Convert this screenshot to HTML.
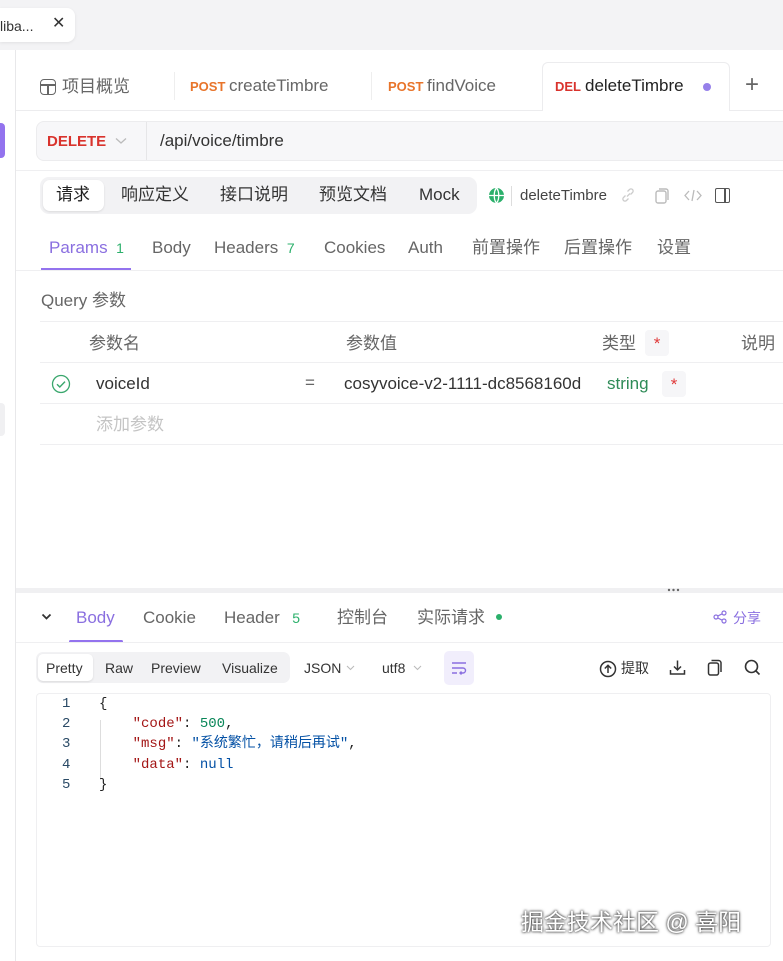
<!DOCTYPE html>
<html><head><meta charset="utf-8"><style>
*{margin:0;padding:0;box-sizing:border-box}
body{width:783px;height:961px;overflow:hidden;background:#fff;font-family:"Liberation Sans","Noto Sans CJK SC",sans-serif;color:#333;position:relative;font-size:17px}
.a{position:absolute;white-space:nowrap;line-height:22px}
.g{color:#666}
.mono{font-family:"Liberation Mono","Noto Sans CJK SC",monospace;font-size:14px}
</style></head><body>
<div class="a" style="left:0;top:0;width:783px;height:50px;background:#f3f3f5"></div>
<div class="a" style="left:0;top:8px;width:75px;height:34px;background:#fff;border-radius:0 8px 8px 0;box-shadow:0 1px 3px rgba(0,0,0,.08)"></div>
<div class="a" style="left:0;top:15px;font-size:14px;color:#333">liba...</div>
<div class="a" style="left:52px;top:13px;font-size:16px;color:#333">✕</div>
<div class="a" style="left:15px;top:50px;width:1px;height:911px;background:#e8e8ea"></div>
<div class="a" style="left:0;top:123px;width:5px;height:35px;background:#9373ee;border-radius:0 4px 4px 0"></div>
<div class="a" style="left:0;top:403px;width:5px;height:33px;background:#f0f0f2;border-radius:0 4px 4px 0"></div>
<!-- tabs -->
<div class="a" style="left:16px;top:110px;width:767px;height:1px;background:#ececee"></div>
<div class="a" style="left:542px;top:62px;width:188px;height:49px;background:#fff;border:1px solid #ececee;border-bottom:none;border-radius:6px 6px 0 0"></div>
<div class="a" style="left:40px;top:79px;width:16px;height:16px;border:1.5px solid #666;border-radius:4px"></div>
<div class="a" style="left:41px;top:84px;width:14px;height:1.5px;background:#666"></div>
<div class="a" style="left:47px;top:84px;width:1.5px;height:10px;background:#666"></div>
<div class="a g" style="left:62px;top:76px">项目概览</div>
<div class="a" style="left:174px;top:72px;width:1px;height:28px;background:#eee"></div>
<div class="a" style="left:190px;top:76px;font-size:13px;font-weight:bold;color:#e8742a">POST</div>
<div class="a g" style="left:229px;top:75px">createTimbre</div>
<div class="a" style="left:371px;top:72px;width:1px;height:28px;background:#eee"></div>
<div class="a" style="left:388px;top:76px;font-size:13px;font-weight:bold;color:#e8742a">POST</div>
<div class="a g" style="left:427px;top:75px">findVoice</div>
<div class="a" style="left:555px;top:76px;font-size:13px;font-weight:bold;color:#d9332d">DEL</div>
<div class="a" style="left:585px;top:75px;color:#222">deleteTimbre</div>
<div class="a" style="left:703px;top:83px;width:8px;height:8px;border-radius:50%;background:#9680ea"></div>
<div class="a" style="left:745px;top:74px;font-size:24px;color:#666;font-weight:300">+</div>
<!-- url bar -->
<div class="a" style="left:36px;top:121px;width:760px;height:40px;background:#f7f7f9;border:1px solid #ececee;border-radius:8px"></div>
<div class="a" style="left:146px;top:122px;width:1px;height:38px;background:#e6e6e8"></div>
<div class="a" style="left:47px;top:131px;font-size:15px;font-weight:bold;color:#d9332d">DELETE</div>
<svg class="a" style="left:115px;top:137px" width="12" height="8" viewBox="0 0 12 8"><path d="M1 1.5l5 4.5 5-4.5" stroke="#bbb" stroke-width="1.3" fill="none"/></svg>
<div class="a" style="left:160px;top:130px;color:#333">/api/voice/timbre</div>
<div class="a" style="left:16px;top:170px;width:767px;height:1px;background:#efeff1"></div>
<!-- segmented -->
<div class="a" style="left:40px;top:177px;width:437px;height:37px;background:#f2f2f4;border-radius:9px"></div>
<div class="a" style="left:43px;top:180px;width:61px;height:31px;background:#fff;border-radius:7px;box-shadow:0 1px 2px rgba(0,0,0,.1)"></div>
<div class="a" style="left:56px;top:184px;color:#222">请求</div>
<div class="a" style="left:121px;top:184px">响应定义</div>
<div class="a" style="left:220px;top:184px">接口说明</div>
<div class="a" style="left:319px;top:184px">预览文档</div>
<div class="a" style="left:419px;top:184px">Mock</div>
<svg class="a" style="left:488px;top:187px" width="17" height="17" viewBox="0 0 17 17"><circle cx="8.5" cy="8.5" r="7.5" fill="#2bb06b"/><path d="M1 8.5h15M8.5 1c-3 3-3 12 0 15M8.5 1c3 3 3 12 0 15" stroke="#fff" stroke-width="1.3" fill="none"/></svg>
<div class="a" style="left:511px;top:186px;width:1px;height:20px;background:#ddd"></div>
<div class="a" style="left:520px;top:185px;font-size:15px;color:#444">deleteTimbre</div>
<svg class="a" style="left:620px;top:187px" width="16" height="16" viewBox="0 0 16 16"><path d="M7 9.5l3-3M5.5 8.5l-2 2a2.1 2.1 0 003 3l2-2M10.5 7.5l2-2a2.1 2.1 0 00-3-3l-2 2" stroke="#ccc" stroke-width="1.3" fill="none"/></svg>
<svg class="a" style="left:654px;top:187px" width="16" height="17" viewBox="0 0 16 17"><rect x="2" y="4" width="10" height="12" rx="2" stroke="#bbb" stroke-width="1.4" fill="none"/><path d="M5 2h7a2 2 0 012 2v9" stroke="#bbb" stroke-width="1.4" fill="none"/></svg>
<svg class="a" style="left:684px;top:187px" width="18" height="17" viewBox="0 0 18 17"><path d="M5 4L1 8.5 5 13M13 4l4 4.5-4 4.5M10 3L8 14" stroke="#bbb" stroke-width="1.3" fill="none"/></svg>
<div class="a" style="left:715px;top:188px;width:15px;height:15px;border:1.8px solid #555;border-radius:2px"></div>
<div class="a" style="left:724px;top:188px;width:1.8px;height:15px;background:#555"></div>
<!-- param tabs -->
<div class="a" style="left:49px;top:237px;color:#8a6fe0">Params <span style="color:#2bb06b;font-size:14px">&nbsp;1</span></div>
<div class="a" style="left:41px;top:268px;width:90px;height:2px;background:#9373ee"></div>
<div class="a" style="left:16px;top:270px;width:767px;height:1px;background:#efeff1"></div>
<div class="a g" style="left:152px;top:237px">Body</div>
<div class="a g" style="left:214px;top:237px">Headers <span style="color:#2bb06b;font-size:14px">&nbsp;7</span></div>
<div class="a g" style="left:324px;top:237px">Cookies</div>
<div class="a g" style="left:408px;top:237px">Auth</div>
<div class="a g" style="left:472px;top:237px">前置操作</div>
<div class="a g" style="left:564px;top:237px">后置操作</div>
<div class="a g" style="left:657px;top:237px">设置</div>
<div class="a g" style="left:41px;top:290px">Query 参数</div>
<div class="a" style="left:40px;top:321px;width:743px;height:1px;background:#efeff1"></div>
<div class="a g" style="left:89px;top:333px">参数名</div>
<div class="a g" style="left:346px;top:333px">参数值</div>
<div class="a g" style="left:602px;top:333px">类型</div>
<div class="a" style="left:645px;top:330px;width:24px;height:26px;background:#f6f6f8;border-radius:4px;color:#e03a3a;text-align:center;line-height:28px">*</div>
<div class="a g" style="left:741px;top:333px">说明</div>
<div class="a" style="left:40px;top:362px;width:743px;height:1px;background:#efeff1"></div>
<svg class="a" style="left:51px;top:374px" width="20" height="20" viewBox="0 0 20 20"><circle cx="10" cy="10" r="8.5" fill="none" stroke="#3aa76d" stroke-width="1.3"/><path d="M6 10.2l2.8 2.8 5.2-5.4" fill="none" stroke="#3aa76d" stroke-width="1.4"/></svg>
<div class="a" style="left:96px;top:373px">voiceId</div>
<div class="a g" style="left:305px;top:372px">=</div>
<div class="a" style="left:344px;top:373px">cosyvoice-v2-1111-dc8568160d</div>
<div class="a" style="left:607px;top:373px;color:#2e8b57">string</div>
<div class="a" style="left:662px;top:371px;width:24px;height:26px;background:#f6f6f8;border-radius:4px;color:#e03a3a;text-align:center;line-height:28px">*</div>
<div class="a" style="left:40px;top:403px;width:743px;height:1px;background:#efeff1"></div>
<div class="a" style="left:96px;top:414px;color:#c4c4c4">添加参数</div>
<div class="a" style="left:40px;top:444px;width:743px;height:1px;background:#efeff1"></div>
<!-- divider -->
<div class="a" style="left:16px;top:588px;width:767px;height:5px;background:#f0f0f2"></div>
<svg class="a" style="left:667px;top:588px" width="14" height="4"><circle cx="2" cy="2" r="1.2" fill="#666"/><circle cx="6.5" cy="2" r="1.2" fill="#666"/><circle cx="11" cy="2" r="1.2" fill="#666"/></svg>
<!-- response -->
<svg class="a" style="left:41px;top:613px" width="11" height="8" viewBox="0 0 11 8"><path d="M1.5 1.5l4 4 4-4" stroke="#333" stroke-width="1.8" fill="none"/></svg>
<div class="a" style="left:76px;top:607px;color:#8a6fe0">Body</div>
<div class="a" style="left:69px;top:640px;width:54px;height:3px;background:#9373ee;border-radius:2px"></div>
<div class="a" style="left:16px;top:642px;width:767px;height:1px;background:#efeff1"></div>
<div class="a g" style="left:143px;top:607px">Cookie</div>
<div class="a g" style="left:224px;top:607px">Header <span style="color:#2bb06b;font-size:14px">&nbsp;&nbsp;5</span></div>
<div class="a g" style="left:337px;top:607px">控制台</div>
<div class="a g" style="left:417px;top:607px">实际请求</div>
<div class="a" style="left:496px;top:614px;width:6px;height:6px;border-radius:50%;background:#2bb06b"></div>
<svg class="a" style="left:713px;top:610px" width="14" height="14" viewBox="0 0 14 14"><circle cx="3" cy="7" r="2" fill="none" stroke="#8a6fe0" stroke-width="1.2"/><circle cx="11" cy="3" r="2" fill="none" stroke="#8a6fe0" stroke-width="1.2"/><circle cx="11" cy="11" r="2" fill="none" stroke="#8a6fe0" stroke-width="1.2"/><path d="M4.8 6l4.4-2.2M4.8 8l4.4 2.2" stroke="#8a6fe0" stroke-width="1.2"/></svg>
<div class="a" style="left:733px;top:607px;font-size:14px;color:#8a6fe0">分享</div>
<div class="a" style="left:36px;top:652px;width:254px;height:31px;background:#f2f2f4;border-radius:7px"></div>
<div class="a" style="left:38px;top:654px;width:55px;height:27px;background:#fff;border-radius:5px;box-shadow:0 1px 2px rgba(0,0,0,.1)"></div>
<div class="a" style="left:46px;top:657px;font-size:14px">Pretty</div>
<div class="a" style="left:105px;top:657px;font-size:14px">Raw</div>
<div class="a" style="left:151px;top:657px;font-size:14px">Preview</div>
<div class="a" style="left:222px;top:657px;font-size:14px">Visualize</div>
<div class="a" style="left:304px;top:657px;font-size:14px">JSON</div>
<svg class="a" style="left:346px;top:665px" width="9" height="6" viewBox="0 0 9 6"><path d="M1 1l3.5 3.5L8 1" stroke="#bbb" stroke-width="1.1" fill="none"/></svg>
<div class="a" style="left:382px;top:657px;font-size:14px">utf8</div>
<svg class="a" style="left:413px;top:665px" width="9" height="6" viewBox="0 0 9 6"><path d="M1 1l3.5 3.5L8 1" stroke="#bbb" stroke-width="1.1" fill="none"/></svg>
<div class="a" style="left:444px;top:651px;width:30px;height:34px;background:#f1eefc;border-radius:5px"></div>
<svg class="a" style="left:451px;top:661px" width="16" height="14" viewBox="0 0 16 14"><path d="M1 2h14M1 7h11a2.5 2.5 0 010 5H9M1 12h5M10.5 10.5L9 12l1.5 1.5" stroke="#8a6fe0" stroke-width="1.4" fill="none"/></svg>
<svg class="a" style="left:599px;top:660px" width="18" height="18" viewBox="0 0 18 18"><circle cx="9" cy="9" r="7.5" fill="none" stroke="#333" stroke-width="1.5"/><path d="M9 13V5.5M5.8 8.5L9 5.3l3.2 3.2" stroke="#333" stroke-width="1.5" fill="none"/></svg>
<div class="a" style="left:621px;top:657px;font-size:14px">提取</div>
<svg class="a" style="left:669px;top:659px" width="17" height="17" viewBox="0 0 17 17"><path d="M8.5 1.5v9M5 7.5l3.5 3.5L12 7.5M1.5 11v4h14v-4" stroke="#333" stroke-width="1.5" fill="none"/></svg>
<svg class="a" style="left:707px;top:659px" width="16" height="17" viewBox="0 0 16 17"><rect x="1.5" y="4" width="10" height="12" rx="2" stroke="#333" stroke-width="1.5" fill="none"/><path d="M4.5 1.5h7a2.5 2.5 0 012.5 2.5v9" stroke="#333" stroke-width="1.5" fill="none"/></svg>
<svg class="a" style="left:744px;top:659px" width="17" height="17" viewBox="0 0 17 17"><circle cx="7.5" cy="7.5" r="6" stroke="#333" stroke-width="1.6" fill="none"/><path d="M12 12l3.5 3.5" stroke="#333" stroke-width="1.6"/></svg>
<div class="a" style="left:36px;top:693px;width:735px;height:254px;border:1px solid #efeff1;border-radius:4px"></div>
<div class="a" style="left:100px;top:720px;width:1px;height:60px;background:#ddd"></div>
<div class="a mono" style="left:62px;top:694px;line-height:20.2px;color:#2a4a66">1<br>2<br>3<br>4<br>5</div>
<div class="a mono" style="left:99px;top:694px;line-height:20.2px;color:#222">{<br>&nbsp;&nbsp;&nbsp;&nbsp;<span style="color:#a31515">"code"</span>: <span style="color:#098658">500</span>,<br>&nbsp;&nbsp;&nbsp;&nbsp;<span style="color:#a31515">"msg"</span>: <span style="color:#0451a5">"系统繁忙，请稍后再试"</span>,<br>&nbsp;&nbsp;&nbsp;&nbsp;<span style="color:#a31515">"data"</span>: <span style="color:#0451a5">null</span><br>}</div>
<div class="a" style="left:521px;top:908px;font-size:23px;line-height:28px;color:#fff;text-shadow:0 0 2px #333,0 0 3px #555">掘金技术社区 @ 喜阳</div>
</body></html>
